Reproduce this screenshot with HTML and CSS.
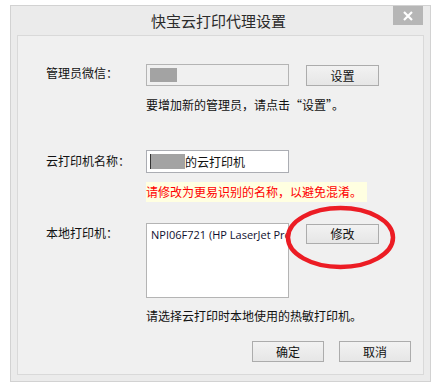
FILE: index.html
```html
<!DOCTYPE html>
<html lang="zh-CN">
<head>
<meta charset="utf-8">
<title>快宝云打印代理设置</title>
<link rel="stylesheet" href="styles.css">
</head>
<body>
<div class="window">
  <div class="titlebar">
    <span class="title">快宝云打印代理设置</span>
    <span class="close">
      <svg width="12" height="10" viewBox="0 0 12 10"><path d="M2 1 L10 9 M10 1 L2 9" stroke="#fff" stroke-width="2.2" fill="none"/></svg>
    </span>
  </div>
  <div class="panel">
    <div class="row row1">
      <div class="label">管理员微信：</div>
      <div class="field field-disabled"><span class="mask mask1"></span></div>
      <button class="btn">设置</button>
    </div>
    <div class="hint hint1">要增加新的管理员，请点击“设置”。</div>

    <div class="row row2">
      <div class="label">云打印机名称：</div>
      <div class="field field-text"><span class="caret"></span><span class="mask mask2"></span><span class="val">的云打印机</span></div>
    </div>
    <div class="warn">请修改为更易识别的名称，以避免混淆。</div>

    <div class="row row3">
      <div class="label">本地打印机：</div>
      <div class="listbox"><div class="item">NPI06F721 (HP LaserJet Pro MFP M225dw)</div></div>
      <div class="btnwrap">
        <button class="btn">修改</button>
        <svg class="circle" width="112" height="66" viewBox="0 0 112 66"><ellipse cx="55.5" cy="32.5" rx="52.5" ry="29.5" fill="none" stroke="#ec1c24" stroke-width="4.5"/></svg>
      </div>
    </div>
    <div class="hint hint3">请选择云打印时本地使用的热敏打印机。</div>

    <div class="actions">
      <button class="btn">确定</button>
      <button class="btn">取消</button>
    </div>
  </div>
</div>
</body>
</html>
```

FILE: styles.css
```css
html, body {
  margin: 0;
  padding: 0;
  background: #ffffff;
}
body {
  font-family: "Noto Sans CJK SC", "Noto Sans", sans-serif;
  font-size: 12px;
  color: #111;
}
.window {
  margin: 5px 0 0 10px;
  width: 419px;
  height: 375px;
  border: 1px solid #d2d2d2;
  background: #ebebeb;
  display: flex;
  flex-direction: column;
}
.titlebar {
  position: relative;
  height: 29px;
  display: flex;
  align-items: center;
  justify-content: center;
}
.title {
  font-size: 15px;
  color: #2b2b2b;
  margin-left: -4px;
}
.close {
  position: absolute;
  top: 0;
  right: 7px;
  width: 30px;
  height: 19px;
  background: #b6b6b6;
  display: flex;
  align-items: center;
  justify-content: center;
}
.panel {
  margin: 0 6px 6px 6px;
  flex: 1;
  border: 1px solid #d9d9d9;
  background: #f0f0f0;
  padding: 0 12px 0 28px;
  display: flex;
  flex-direction: column;
}
.row {
  display: grid;
  grid-template-columns: 100px 143px auto;
  align-items: start;
}
.row > .btn, .row > .btnwrap { margin-left: 17px; }
.label {
  line-height: 16px;
  color: #111;
  white-space: nowrap;
}
.row1 { margin-top: 28px; }
.row1 .label { margin-top: 1px; }
.row2 { margin-top: 37px; }
.row2 .label { margin-top: 3px; }
.row3 { margin-top: 21px; }
.row3 .label { margin-top: 2px; }
.field {
  box-sizing: border-box;
  height: 22px;
  border: 1px solid #abadb3;
  display: flex;
  align-items: center;
  padding-left: 3px;
}
.field-disabled {
  background: #f0f0f0;
  border-color: #b4b4b4;
}
.field-text {
  background: #fff;
  height: 23px;
  padding-left: 3px;
}
.mask {
  display: inline-block;
  background: #a3a3a3;
}
.mask1 { width: 27px; height: 14px; }
.caret {
  display: inline-block;
  width: 1px;
  height: 15px;
  background: #333;
}
.mask2 { width: 34px; height: 15px; }
.val { line-height: 16px; color: #111; }
.btn {
  box-sizing: border-box;
  width: 73px;
  height: 21px;
  margin: 0;
  padding: 0;
  border: 1px solid #acacac;
  background: linear-gradient(#f2f2f2, #e6e6e6);
  font-family: "Noto Sans CJK SC", sans-serif;
  font-size: 12px;
  color: #111;
  line-height: 16px;
}
.row1 .btn { margin-top: 1px; }
.hint {
  margin-left: 100px;
  line-height: 16px;
}
.hint1 { margin-top: 11px; }
.warn {
  margin-left: 100px;
  margin-top: 9px;
  width: 221px;
  height: 20px;
  line-height: 20px;
  background: #ffffe1;
  color: #ff0000;
  white-space: nowrap;
}
.listbox {
  box-sizing: border-box;
  height: 75px;
  border: 1px solid #b4b4b4;
  background: #fff;
  overflow: hidden;
  padding: 3px 0 0 4px;
}
.item {
  font-family: "Open Sans", "Noto Sans", sans-serif;
  font-size: 11px;
  line-height: 16px;
  white-space: nowrap;
  color: #101030;
}
.btnwrap {
  position: relative;
  margin-top: 1px;
}
.btnwrap .btn { width: 73px; height: 20px; }
.circle {
  position: absolute;
  left: -21px;
  top: -19px;
  pointer-events: none;
}
.hint3 { margin-top: 10px; }
.actions {
  margin-top: 17px;
  display: flex;
  justify-content: flex-end;
  gap: 15px;
}
.actions .btn { width: 72px; }
```
